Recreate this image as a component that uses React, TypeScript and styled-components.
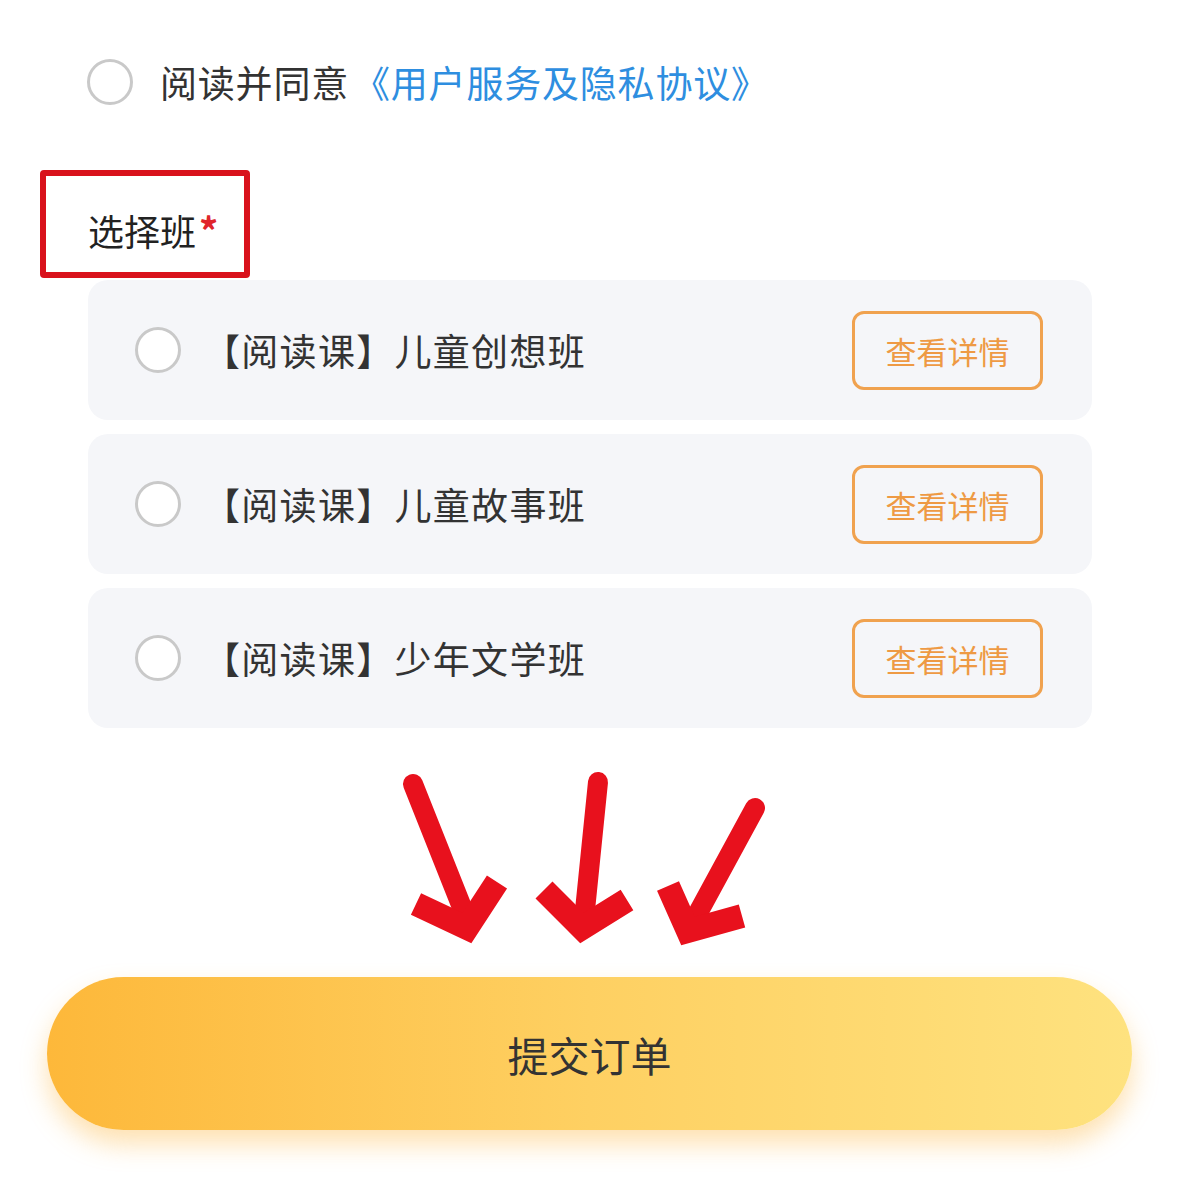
import styled, { createGlobalStyle } from "styled-components";

const GlobalStyle = createGlobalStyle`
  body {
    margin: 0;
    background: #ffffff;
    font-family: "Noto Sans CJK SC", "Noto Sans", sans-serif;
    color: #333333;
  }
`;

const classes = ["【阅读课】儿童创想班", "【阅读课】儿童故事班", "【阅读课】少年文学班"];

export default function App() {
  return (
    <>
      <GlobalStyle />
      <Page>
        <AgreeRow>
          <Radio />
          <AgreeText>
            阅读并同意<Link>《用户服务及隐私协议》</Link>
          </AgreeText>
        </AgreeRow>

        <SectionTitle>
          选择班<Required>*</Required>
          <MarkFrame />
        </SectionTitle>

        <ClassList>
          {classes.map((name) => (
            <ClassCard key={name}>
              <Radio />
              <ClassName>{name}</ClassName>
              <DetailButton>查看详情</DetailButton>
            </ClassCard>
          ))}
        </ClassList>

        <Arrows viewBox="0 0 1179 249" width="1179" height="249">
          <g stroke="#e8111d" fill="none" strokeLinejoin="miter">
            {/* left arrow */}
            <path d="M413 56 L467 192" strokeWidth="20" strokeLinecap="round" />
            <path d="M416 176 L467 200 L497 154" strokeWidth="24" strokeLinecap="butt" />
            {/* middle arrow */}
            <path d="M598 54 L584 192" strokeWidth="20" strokeLinecap="round" />
            <path d="M544 162 L582 200 L627 172" strokeWidth="24" strokeLinecap="butt" />
            {/* right arrow */}
            <path d="M755 80 L692 196" strokeWidth="20" strokeLinecap="round" />
            <path d="M668 158 L688 203 L742 188" strokeWidth="24" strokeLinecap="butt" />
          </g>
        </Arrows>

        <SubmitButton>提交订单</SubmitButton>
      </Page>
    </>
  );
}

const Page = styled.div`
  width: 1179px;
  padding-top: 59px;
  padding-bottom: 60px;
  box-sizing: border-box;
`;

const AgreeRow = styled.div`
  display: flex;
  align-items: center;
  padding-left: 87px;
  gap: 27px;
`;

const Radio = styled.span`
  display: block;
  flex: none;
  width: 46px;
  height: 46px;
  border-radius: 50%;
  border: 3px solid #c9c9c9;
  box-sizing: border-box;
  background: #ffffff;
`;

const AgreeText = styled.div`
  font-size: 37px;
  letter-spacing: 0.8px;
  line-height: 46px;
  color: #333333;
`;

const Link = styled.span`
  color: #2e8ee0;
  margin-left: 4px;
`;

const SectionTitle = styled.div`
  position: relative;
  margin: 100px 0 25px 88px;
  width: fit-content;
  font-size: 36px;
  line-height: 50px;
  color: #222222;
`;

const Required = styled.span`
  color: #e0252b;
  font-weight: 700;
  font-size: 38px;
  margin-left: 3px;
`;

const MarkFrame = styled.div`
  position: absolute;
  left: -48px;
  top: -35px;
  width: 210px;
  height: 108px;
  border: 6px solid #d9121c;
  border-radius: 4px;
  box-sizing: border-box;
  pointer-events: none;
`;

const ClassList = styled.div`
  display: flex;
  flex-direction: column;
  gap: 14px;
  margin-left: 88px;
  width: 1004px;
`;

const ClassCard = styled.div`
  display: flex;
  align-items: center;
  height: 140px;
  padding: 0 49px 0 47px;
  box-sizing: border-box;
  border-radius: 20px;
  background: #f5f6f9;
`;

const ClassName = styled.div`
  flex: 1;
  margin-left: 22px;
  font-size: 37px;
  letter-spacing: 1.3px;
  color: #333333;
`;

const DetailButton = styled.div`
  width: 191px;
  height: 79px;
  display: flex;
  align-items: center;
  justify-content: center;
  box-sizing: border-box;
  border: 3px solid #f0a24f;
  border-radius: 12px;
  font-size: 31px;
  color: #ee9a44;
`;

const Arrows = styled.svg`
  display: block;
`;

const SubmitButton = styled.div`
  margin: 0 47px;
  height: 153px;
  border-radius: 77px;
  background: linear-gradient(90deg, #fdb83a 0%, #fed062 50%, #fee27f 100%);
  box-shadow: 0 14px 26px rgba(253, 180, 60, 0.4);
  display: flex;
  align-items: center;
  justify-content: center;
  font-size: 41px;
  color: #333333;
`;
